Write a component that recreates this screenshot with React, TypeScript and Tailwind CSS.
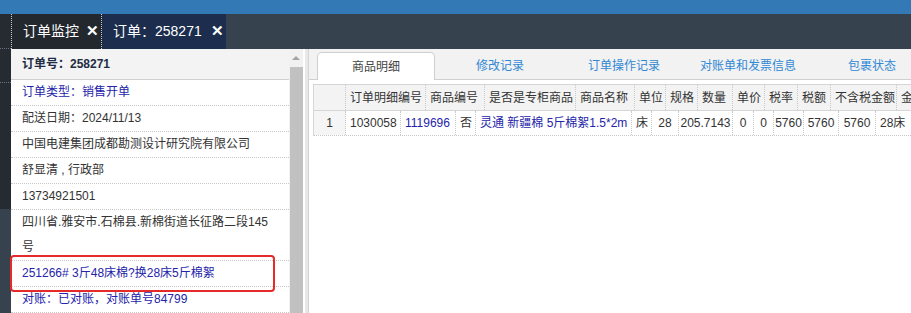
import React from "react";

const FONT = "font-['Liberation_Sans','Noto_Sans_CJK_SC',sans-serif]";

const infoRows: { text: string; blue?: boolean; tall?: boolean }[] = [
  { text: "订单类型：销售开单", blue: true },
  { text: "配送日期：2024/11/13" },
  { text: "中国电建集团成都勘测设计研究院有限公司" },
  { text: "舒显清 , 行政部" },
  { text: "13734921501" },
  { text: "四川省.雅安市.石棉县.新棉街道长征路二段145号", tall: true },
  { text: "251266# 3斤48床棉?换28床5斤棉絮", blue: true },
  { text: "对账：已对账，对账单号84799", blue: true },
];

const headCols: [string, number][] = [
  ["", 32],
  ["订单明细编号", 80],
  ["商品编号", 59],
  ["是否是专柜商品", 91],
  ["商品名称", 59],
  ["单位", 31],
  ["规格", 32],
  ["数量", 35],
  ["单价", 32],
  ["税率", 33],
  ["税额", 33],
  ["不含税金额", 66],
  ["金额", 60],
];

const bodyCols: { t: string; w: number; blue?: boolean; center?: boolean }[] = [
  { t: "1", w: 32, center: true },
  { t: "1030058", w: 55 },
  { t: "1119696", w: 55, blue: true },
  { t: "否", w: 20 },
  { t: "灵通 新疆棉 5斤棉絮1.5*2m", w: 156, blue: true },
  { t: "床", w: 20 },
  { t: "28", w: 27, center: true },
  { t: "205.7143", w: 54, center: true },
  { t: "0", w: 21, center: true },
  { t: "0", w: 20, center: true },
  { t: "5760", w: 30, center: true },
  { t: "5760", w: 35, center: true },
  { t: "5760", w: 37, center: true },
  { t: "28床", w: 40 },
];

const tabs = ["商品明细", "修改记录", "订单操作记录", "对账单和发票信息", "包裹状态"];

export default function App() {
  return (
    <div className={`w-[911px] h-[313px] overflow-hidden bg-white text-[12px] text-[#333] ${FONT}`}>
      <div className="h-[14px] bg-[#3279b6]" />
      <div className="flex h-[299px]">
        {/* left menu strip */}
        <div className="w-[11px] flex flex-col bg-[#262b31]">
          <div className="h-[35px] border-b border-dotted border-[#6b7380]" />
          <div className="h-[34px] border-b border-dotted border-[#6b7380]" />
          <div className="h-[126px]" />
          <div className="flex-1 bg-[#37424f]" />
        </div>

        <div className="flex-1 flex flex-col min-w-0">
          {/* page tabs */}
          <div className="h-[35px] flex bg-[#37424f] text-white text-[14px]">
            <div className="w-[91px] flex items-center pl-[11px] gap-[7px] bg-[#23282f] border-x border-dotted border-[#c9ccd1]">
              <span>订单监控</span>
              <span className="font-bold text-[15px]">✕</span>
            </div>
            <div className="w-[124px] flex items-center pl-[11px] gap-[9px] bg-[#1c2d4d]">
              <span>订单：258271</span>
              <span className="font-bold text-[15px]">✕</span>
            </div>
          </div>

          <div className="flex flex-1 min-h-0">
            {/* left info panel */}
            <div className="relative w-[278px] flex flex-col">
              <div className="h-[32px] flex items-center pl-[11px] bg-[#f3f3f3] border-b border-[#cfcfcf] font-bold text-[#222c44]">
                订单号：258271
              </div>
              {infoRows.map((r, i) => (
                <div
                  key={i}
                  className={`pl-[11px] pr-2 leading-[25px] border-b border-dotted border-[#c8c8c8] ${
                    r.blue ? "text-[#2424aa]" : "text-[#333]"
                  }`}
                >
                  {r.tall ? (
                    <>
                      四川省.雅安市.石棉县.新棉街道长征路二段145
                      <br />号
                    </>
                  ) : (
                    r.text
                  )}
                </div>
              ))}
              <div className="absolute left-[-1px] top-[206px] w-[265px] h-[37px] border-2 border-[#e52a2a] rounded-[4px]" />
            </div>

            {/* scrollbar */}
            <div className="w-[14px] bg-[#f1f1f1] flex flex-col items-center">
              <div className="mt-[7px] w-0 h-0 border-x-[4px] border-x-transparent border-b-[4px] border-b-[#a3a3a3]" />
              <div className="mt-[7px] w-[13px] flex-1 bg-[#c1c1c1]" />
            </div>

            {/* splitter */}
            <div className="w-[6px] bg-[#e8e8e8] border-l-2 border-white border-r border-r-[#d4d4d4]" />

            {/* right panel */}
            <div className="flex-1 min-w-0 flex flex-col bg-white overflow-hidden">
              <div className="h-[31px] flex items-end gap-[6px] pl-[8px] bg-[#f2f2f2] border-b border-[#d0d0d0]">
                {tabs.map((t, i) => (
                  <div
                    key={t}
                    className={`shrink-0 w-[118px] flex items-center justify-center text-[12px] ${
                      i === 0
                        ? "bg-white border border-b-0 border-[#cfcfcf] rounded-t-[5px] text-[#444] -mb-px h-[28px]"
                        : "text-[#3188d4] h-[27px]"
                    }`}
                  >
                    {t}
                  </div>
                ))}
              </div>

              <div className="pl-[4px] pt-[4px]">
                <div className="border-l border-t border-[#d6d6d6] w-[700px]">
                  <div className="flex h-[26px] bg-[#f3f3f3] border-b border-[#d6d6d6]">
                    {headCols.map(([t, w], i) => (
                      <div
                        key={i}
                        style={{ width: w }}
                        className="shrink-0 flex items-center pl-[4px] whitespace-nowrap overflow-hidden border-r border-dotted border-[#c8c8c8] text-[#333]"
                      >
                        {t}
                      </div>
                    ))}
                  </div>
                  <div className="flex h-[25px] border-b border-dotted border-[#c8c8c8]">
                    {bodyCols.map((c, i) => (
                      <div
                        key={i}
                        style={{ width: c.w }}
                        className={`shrink-0 flex items-center whitespace-nowrap overflow-hidden border-r border-dotted border-[#c8c8c8] ${
                          c.center ? "justify-center" : "pl-[4px]"
                        } ${c.blue ? "text-[#2424aa]" : "text-[#333]"} ${i === 0 ? "bg-[#f5f5f5]" : ""}`}
                      >
                        {c.t}
                      </div>
                    ))}
                  </div>
                </div>
              </div>
            </div>
          </div>
        </div>
      </div>
    </div>
  );
}
